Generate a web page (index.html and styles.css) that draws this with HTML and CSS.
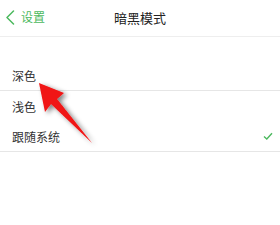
FILE: index.html
```html
<!DOCTYPE html>
<html lang="zh-CN">
<head>
<meta charset="utf-8">
<link rel="stylesheet" href="styles.css">
</head>
<body>
<div class="page">
  <header class="nav">
    <div class="back">
      <svg class="chev" width="10" height="15" viewBox="0 0 10 15"><path d="M8.5 1 L2 7.5 L8.5 14" fill="none" stroke="#4cb95e" stroke-width="1.5" stroke-linecap="round" stroke-linejoin="round"/></svg>
      <span class="back-text">设置</span>
    </div>
    <div class="title">暗黑模式</div>
  </header>
  <ul class="list">
    <li class="row sep">深色</li>
    <li class="row">浅色</li>
    <li class="row sep">跟随系统<svg class="check" width="10" height="8" viewBox="0 0 10 8"><path d="M1 4.5 L3.8 7 L9 1.2" fill="none" stroke="#4cb95e" stroke-width="1.4"/></svg></li>
  </ul>
  <svg class="arrow" width="280" height="225" viewBox="0 0 280 225">
    <defs>
      <filter id="sh" x="-50%" y="-50%" width="200%" height="200%">
        <feGaussianBlur in="SourceAlpha" stdDeviation="2.5"/>
        <feOffset dx="3" dy="2" result="b"/>
        <feComponentTransfer><feFuncA type="linear" slope="0.5"/></feComponentTransfer>
        <feMerge><feMergeNode/><feMergeNode in="SourceGraphic"/></feMerge>
      </filter>
    </defs>
    <polygon points="39,83 64,93 57,99 92,143 51,104 45,112" fill="#f01414" filter="url(#sh)"/>
  </svg>
</div>
</body>
</html>
```
FILE: styles.css
```css
* { box-sizing: border-box; }
html, body { margin: 0; padding: 0; background: #fff; }
body { font-family: "Noto Sans CJK SC", "Noto Sans", sans-serif; }
.page { position: relative; width: 280px; height: 225px; overflow: hidden; }
.nav {
  height: 37px;
  border-bottom: 1px solid #eeeeee;
  display: flex;
  align-items: center;
  position: relative;
  padding-bottom: 2px;
}
.back { display: flex; align-items: center; padding-left: 5px; gap: 6px; color: #4cb95e; font-size: 12px; }
.back-text { line-height: 14px; }
.title {
  position: absolute; left: 0; right: 0; top: 0; height: 36px;
  display: flex; align-items: center; justify-content: center;
  font-size: 13px; color: #222; padding-bottom: 1px;
}
.list { list-style: none; margin: 23px 0 0 0; padding: 0; }
.row {
  height: 30px;
  display: flex; align-items: center; justify-content: space-between;
  padding: 0 7px 0 12px;
  font-size: 12px; color: #333;
}
.row.sep { height: 31px; border-bottom: 1px solid #e6e6e6; }
.check { margin-top: -1px; }
.arrow { position: absolute; left: 0; top: 0; pointer-events: none; }
```
